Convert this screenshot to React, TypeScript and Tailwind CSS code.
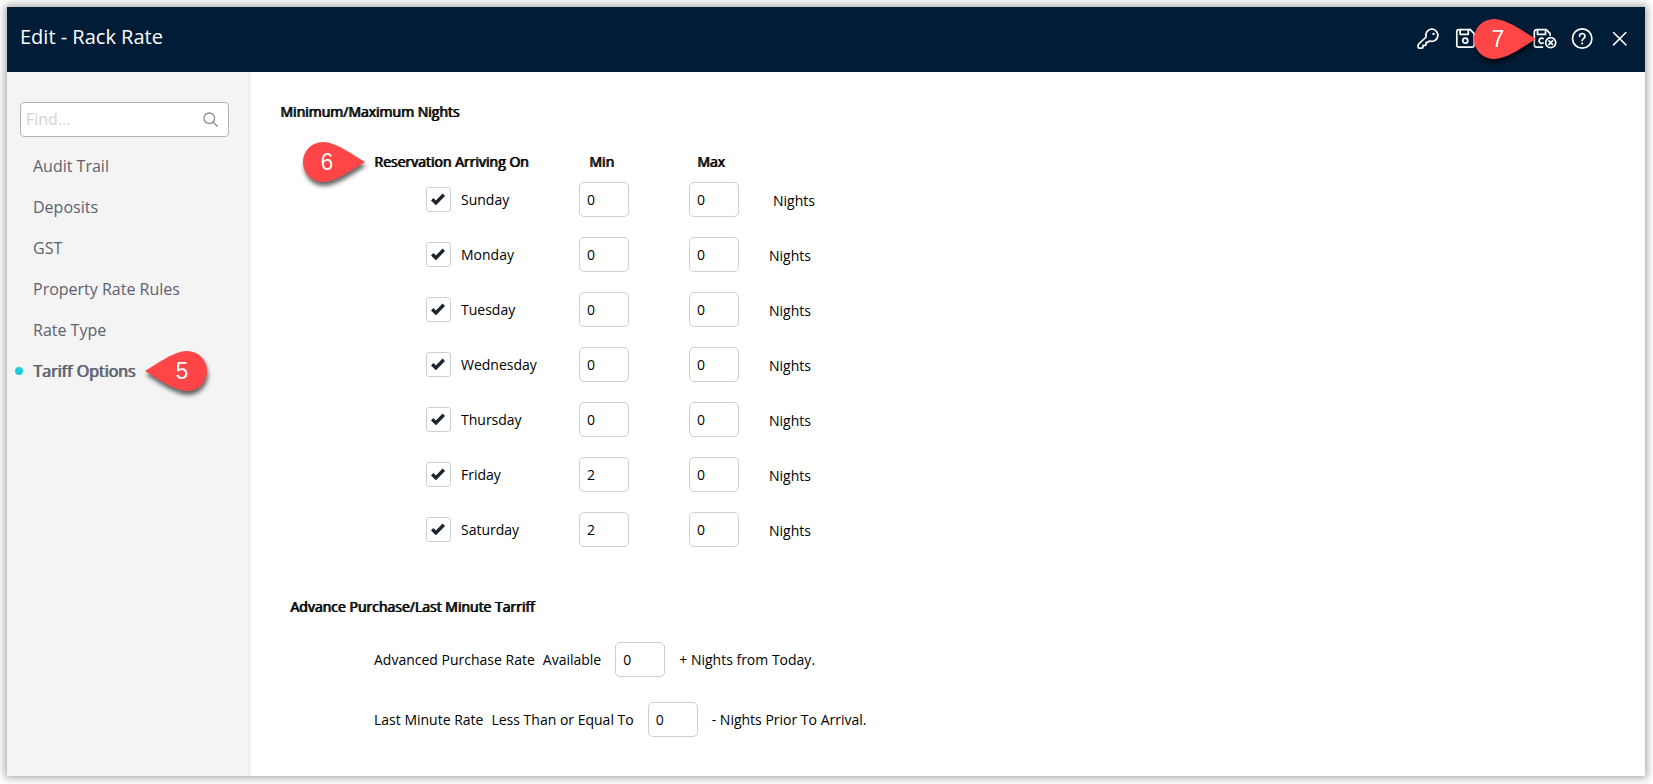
import React from 'react';

interface DayRule {
  day: string;
  min: number;
  max: number;
}

const menuItems = ['Audit Trail', 'Deposits', 'GST', 'Property Rate Rules', 'Rate Type', 'Tariff Options'];

const dayRules: DayRule[] = [
  { day: 'Sunday', min: 0, max: 0 },
  { day: 'Monday', min: 0, max: 0 },
  { day: 'Tuesday', min: 0, max: 0 },
  { day: 'Wednesday', min: 0, max: 0 },
  { day: 'Thursday', min: 0, max: 0 },
  { day: 'Friday', min: 2, max: 0 },
  { day: 'Saturday', min: 2, max: 0 },
];

// The emphasised text is the regular face thickened, so it keeps regular widths
const strong = 'font-normal [text-shadow:1px_0_0_currentColor]';

const Callout: React.FC<{ label: string; pointing: 'left' | 'right'; className: string }> = ({ label, pointing, className }) => (
  <svg
    className={`absolute w-[62px] h-10 overflow-visible pointer-events-none [text-shadow:none] drop-shadow-[1px_4px_2px_rgba(0,0,0,0.6)] ${className}`}
    viewBox="0 0 62 40"
  >
    <path
      fill="#ff4545"
      d={
        pointing === 'right'
          ? 'M62 20C50 13 33 0 20 0a20 20 0 0 0 0 40c13 0 30-13 42-20z'
          : 'M0 20C12 13 29 0 42 0a20 20 0 0 1 0 40C29 40 12 27 0 20z'
      }
    />
    <text
      x={pointing === 'right' ? 24 : 37}
      y="28"
      textAnchor="middle"
      fill="#fff"
      className="text-[23px] font-['Liberation_Sans',sans-serif]"
    >
      {label}
    </text>
  </svg>
);

const HeaderButton: React.FC<{ label: string; children: React.ReactNode }> = ({ label, children }) => (
  <button type="button" aria-label={label} className="w-6 h-6 cursor-pointer">
    <svg className="w-6 h-6 overflow-visible" viewBox="0 0 24 24" fill="none" stroke="currentColor" strokeWidth="1.700" strokeLinecap="round" strokeLinejoin="round">
      {children}
    </svg>
  </button>
);

const NumberBox: React.FC<{ label: string; value: number }> = ({ label, value }) => (
  <input
    type="text"
    inputMode="numeric"
    aria-label={label}
    defaultValue={value}
    className="block w-[50px] h-[35px] px-[7px] border border-[#cfcfcf] rounded-[5px] bg-white text-sm text-black"
  />
);

const Header = () => (
  <header className="flex justify-between h-[65px] px-[13px] bg-[#001c36] text-white">
    <h1 className="text-xl leading-[60px]">Edit - Rack Rate</h1>
    <div className="flex gap-[14px] pt-5">
      <HeaderButton label="Security">
        <path d="M14 2a6.200 6.200 0 0 0-5.900 8L.6 17.100a1.500 1.500 0 0 0-.5 1.100V20a1.100 1.100 0 0 0 1.100 1.100h2.700a1.100 1.100 0 0 0 1.100-1.100v-1.600h2a1.100 1.100 0 0 0 1.100-1.100v-2h1.700l1.700-1.300A6.200 6.200 0 1 0 14 2z" />
        <circle cx="15.500" cy="6.900" r="1.200" fill="currentColor" stroke="none" />
      </HeaderButton>
      <HeaderButton label="Save">
        <path d="M3 2.700h11.200l4 4v11.200a2.200 2.200 0 0 1-2.200 2.200H3A2.200 2.200 0 0 1 .8 17.900v-13A2.200 2.200 0 0 1 3 2.700z" />
        <path d="M4.100 2.700v4.600h8.200V2.700" />
        <circle cx="9.300" cy="13.700" r="2.500" />
      </HeaderButton>
      <div className="relative w-6 h-6">
        <Callout label="7" pointing="right" className="-left-5 -top-2" />
      </div>
      <HeaderButton label="Save and close">
        <path d="M10.500 20.100H4.500a2.200 2.200 0 0 1-2.200-2.200v-13a2.200 2.200 0 0 1 2.200-2.200h9.700l4 4v1.500" />
        <path d="M5.500 2.700v4.600h8V2.700M11.200 11.600a2.600 2.600 0 1 0 0 4.300" />
        <circle cx="18.700" cy="15.700" r="5" />
        <path d="m16.900 13.900 3.600 3.600m0-3.600-3.600 3.600" />
      </HeaderButton>
      <HeaderButton label="Help">
        <circle cx="12.200" cy="11.500" r="9.700" />
        <path d="M9.500 9.300a2.700 2.700 0 1 1 4 2.300c-.9.600-1.300 1.100-1.300 2" />
        <circle cx="12.200" cy="16.500" r="1.100" fill="currentColor" stroke="none" />
      </HeaderButton>
      <HeaderButton label="Close">
        <path strokeWidth="1.500" d="m5.500 5.500 12.400 12.400m0-12.400L5.500 17.900" />
      </HeaderButton>
    </div>
  </header>
);

const Sidebar = () => (
  <aside className="w-[243px] shrink-0 bg-[#f4f4f4] border-r border-[#e6e6e6]">
    <div className="relative mt-[30px] ml-[13px] mr-5">
      <input
        type="search"
        aria-label="Find"
        placeholder="Find..."
        className="block w-full h-[35px] pl-[5px] pr-9 pb-[2px] bg-white border border-[#b3b3b3] rounded-[4px] text-base placeholder:text-[#d3d3d3]"
      />
      <svg className="absolute right-[11px] top-[10px] w-[15px] h-[15px]" viewBox="0 0 15 15" fill="none" stroke="#8c8c8c" strokeWidth="1.300" strokeLinecap="round">
        <circle cx="6.300" cy="6.300" r="5.300" />
        <path d="m10.200 10.200 4.100 4.100" />
      </svg>
    </div>
    <nav className="mt-2">
      {menuItems.map((item) => {
        const active = item === 'Tariff Options';
        return (
          <a
            key={item}
            href="#"
            aria-current={active ? 'page' : undefined}
            className="flex items-center h-[41px] pl-2 text-base text-[#5d6270]"
          >
            <span className={`w-2 h-2 mr-[10px] rounded-full ${active ? 'bg-[#1fcdd8]' : ''}`} />
            <span className={active ? `relative ${strong}` : ''}>
              {item}
              {active && <Callout label="5" pointing="left" className="left-[112px] -top-2" />}
            </span>
          </a>
        );
      })}
    </nav>
  </aside>
);

const NightsTable = () => (
  <table className="ml-[94px] mt-[30px] table-fixed w-[455px] text-left">
    <colgroup>
      <col className="w-[205px]" />
      <col className="w-[110px]" />
      <col className="w-20" />
      <col className="w-[60px]" />
    </colgroup>
    <thead>
      <tr className="h-5">
        <th className={strong}>
          <span className="relative">
            Reservation Arriving On
            <Callout label="6" pointing="right" className="-left-[71px] -top-[10px]" />
          </span>
        </th>
        <th className={`pl-[10px] ${strong}`}>Min</th>
        <th className={`pl-2 ${strong}`}>Max</th>
        <td />
      </tr>
    </thead>
    <tbody>
      {dayRules.map((rule, index) => (
        <tr key={rule.day} className="h-[55px]">
          <td className="pl-[52px]">
            <label className="flex items-center gap-[10px]">
              <span className="relative flex w-[25px] h-[25px]">
                <input type="checkbox" defaultChecked className="peer appearance-none w-full h-full border border-[#cfcfcf] rounded-[3px] bg-white" />
                <svg className="absolute left-[5px] top-[6px] w-[14px] h-3 hidden peer-checked:block pointer-events-none" viewBox="0 0 14 12" fill="none" stroke="#1d2530" strokeWidth="3.400">
                  <path d="m1.200 6.200 3.700 3.700 7.900-8.100" />
                </svg>
              </span>
              {rule.day}
            </label>
          </td>
          <td><NumberBox label={`${rule.day} minimum nights`} value={rule.min} /></td>
          <td><NumberBox label={`${rule.day} maximum nights`} value={rule.max} /></td>
          <td className={index === 0 ? 'pl-1 pt-[2px]' : 'pt-[2px]'}>Nights</td>
        </tr>
      ))}
    </tbody>
  </table>
);

const App = () => (
  <div className="min-h-screen flex p-[7px] pr-2 pb-2 bg-white font-['Open_Sans',sans-serif]">
    <div className="flex-1 flex flex-col bg-white shadow-[0_0_8px_2px_rgba(0,0,0,0.35)]">
      <Header />
      <div className="flex-1 flex">
        <Sidebar />
        <main className="flex-1 pt-[30px] pl-[30px] text-sm text-black">
          <section>
            <h2 className={strong}>Minimum/Maximum Nights</h2>
            <NightsTable />
          </section>
          <section className="mt-10">
            <h2 className={`ml-[10px] ${strong}`}>Advance Purchase/Last Minute Tarriff</h2>
            <div className="ml-[94px] mt-[25px] flex flex-col gap-[25px]">
              <div className="flex items-center gap-[14px]">
                <span className="flex gap-2"><span>Advanced Purchase Rate</span><span>Available</span></span>
                <NumberBox label="Advanced purchase nights" value={0} />
                <span>+ Nights from Today.</span>
              </div>
              <div className="flex items-center gap-[14px]">
                <span className="flex gap-2"><span>Last Minute Rate</span><span>Less Than or Equal To</span></span>
                <NumberBox label="Last minute nights" value={0} />
                <span>- Nights Prior To Arrival.</span>
              </div>
            </div>
          </section>
        </main>
      </div>
    </div>
  </div>
);

export default App;
